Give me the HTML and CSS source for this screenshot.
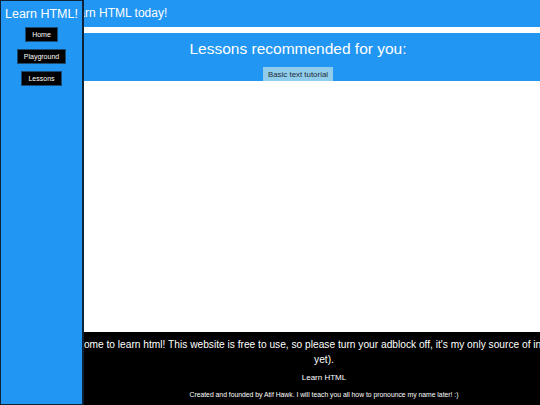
FILE: index.html
```html
<!DOCTYPE html>
<html lang="en">
<head>
    <meta charset="UTF-8">
    <meta name="viewport" content="width=device-width, initial-scale=1.0">
    <title>Learn HTML</title>
    <link rel="stylesheet" href="styles.css">
</head>
<body>
<div class="sidebar">
    <h2>Learn HTML!</h2>
    <button class="nav-btn">Home</button>
    <button class="nav-btn">Playground</button>
    <button class="nav-btn">Lessons</button>
</div>

<header>
    <h1>Learn HTML today!</h1>
</header>

<section class="lessons">
    <h2>Lessons recommended for you:</h2>
    <button class="lesson-btn">Basic text tutorial</button>
</section>

<main class="content"></main>

<footer>
    <div class="footer-inner">
        <p class="notice">Welcome to learn html! This website is free to use, so please turn your adblock off, it's my only source of income (not yet).</p>
        <p class="brand">Learn HTML</p>
        <p class="credits">Created and founded by Atif Hawk. I will teach you all how to pronounce my name later! :)</p>
    </div>
</footer>
</body>
</html>
```

FILE: styles.css
```css
* {
    margin: 0;
    padding: 0;
    box-sizing: border-box;
}

body {
    font-family: 'Liberation Sans', Arial, sans-serif;
    background-color: #fff;
    color: #fff;
    overflow: hidden;
}

.sidebar {
    position: fixed;
    top: 0;
    left: 0;
    width: 84px;
    height: 405px;
    background-color: #2196f3;
    border: 1px solid #0e2238;
    border-right-width: 2px;
    display: flex;
    flex-direction: column;
    align-items: center;
    gap: 7px;
    z-index: 10;
}

.sidebar h2 {
    font-size: 12.5px;
    font-weight: normal;
    line-height: 26px;
    white-space: nowrap;
    margin-bottom: -7px;
}

.nav-btn {
    font-family: 'Liberation Sans', Arial, sans-serif;
    font-size: 7px;
    color: #fff;
    background: #000;
    border: 1px solid #1b4a73;
    padding: 3px 6px;
    height: 15px;
    line-height: 7px;
}

header {
    background-color: #2196f3;
    height: 27px;
    margin-bottom: 6px;
    padding-left: 65px;
}

header h1 {
    font-size: 12px;
    font-weight: normal;
    line-height: 27px;
}

.lessons {
    background-color: #2196f3;
    padding: 7px 0 0 56px;
    text-align: center;
    height: 48px;
}

.lessons h2 {
    font-size: 15.5px;
    font-weight: normal;
    margin-bottom: 9px;
}

.lesson-btn {
    font-family: 'Liberation Sans', Arial, sans-serif;
    font-size: 7.9px;
    color: #1d2b38;
    background: #90cdec;
    border: none;
    height: 14px;
    padding: 0 5px;
    vertical-align: top;
}

.content {
    height: 251px;
}

footer {
    background-color: #000;
    height: 73px;
    overflow: hidden;
}

.footer-inner {
    width: 538px;
    margin-left: 55px;
    text-align: center;
    padding-top: 5px;
}

.notice {
    font-size: 10.2px;
    line-height: 15px;
}

.brand {
    font-size: 8px;
    line-height: 10px;
    margin-top: 6px;
}

.credits {
    font-size: 6.8px;
    line-height: 8px;
    margin-top: 8px;
}
```
